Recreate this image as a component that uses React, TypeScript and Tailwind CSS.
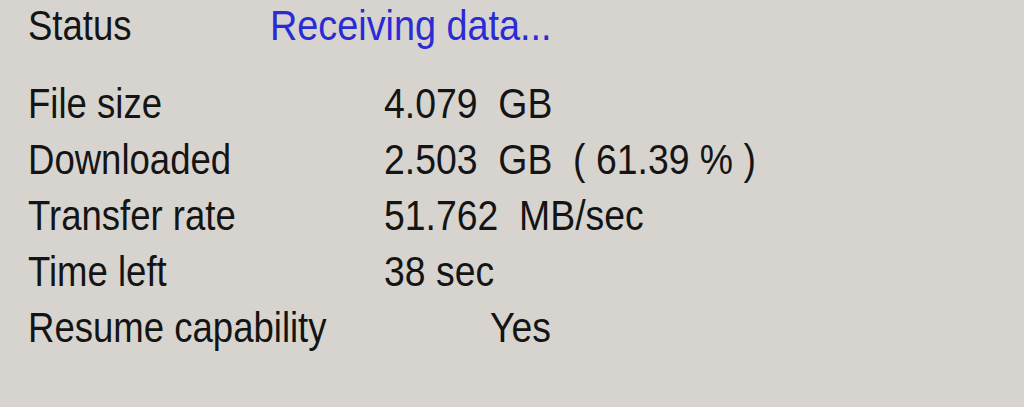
import React from "react";

type Row = { label: string; value: string; indent?: string };

const rows: Row[] = [
  { label: "File size", value: "4.079  GB" },
  { label: "Downloaded", value: "2.503  GB  ( 61.39 % )" },
  { label: "Transfer rate", value: "51.762  MB/sec" },
  { label: "Time left", value: "38 sec" },
  { label: "Resume capability", value: "Yes", indent: "pl-[106px]" },
];

// the dialog font reads narrow and tall, so squeeze it a bit horizontally
const txt = "inline-block origin-left scale-x-[0.87] whitespace-pre";

export default function App() {
  return (
    <div
      className="h-[407px] w-full overflow-hidden bg-[#d7d4cf] pl-[28px] pt-[3px] text-[42px] text-[#141414]"
      style={{ fontFamily: '"Liberation Sans", Arial, sans-serif' }}
    >
      {/* Status */}
      <div className="flex leading-[46px]">
        <div className="w-[242px] shrink-0">
          <span className={txt}>Status</span>
        </div>
        <div className="text-[#2b2bd6]">
          <span className="inline-block origin-left scale-x-[0.9] whitespace-pre">Receiving data...</span>
        </div>
      </div>

      {/* Details */}
      <div className="mt-[27px] flex flex-col">
        {rows.map((r) => (
          <div key={r.label} className="flex leading-[56px]">
            <div className="w-[356px] shrink-0">
              <span className={txt}>{r.label}</span>
            </div>
            <div className={r.indent}>
              <span className="inline-block origin-left scale-x-[0.89] whitespace-pre">{r.value}</span>
            </div>
          </div>
        ))}
      </div>
    </div>
  );
}
